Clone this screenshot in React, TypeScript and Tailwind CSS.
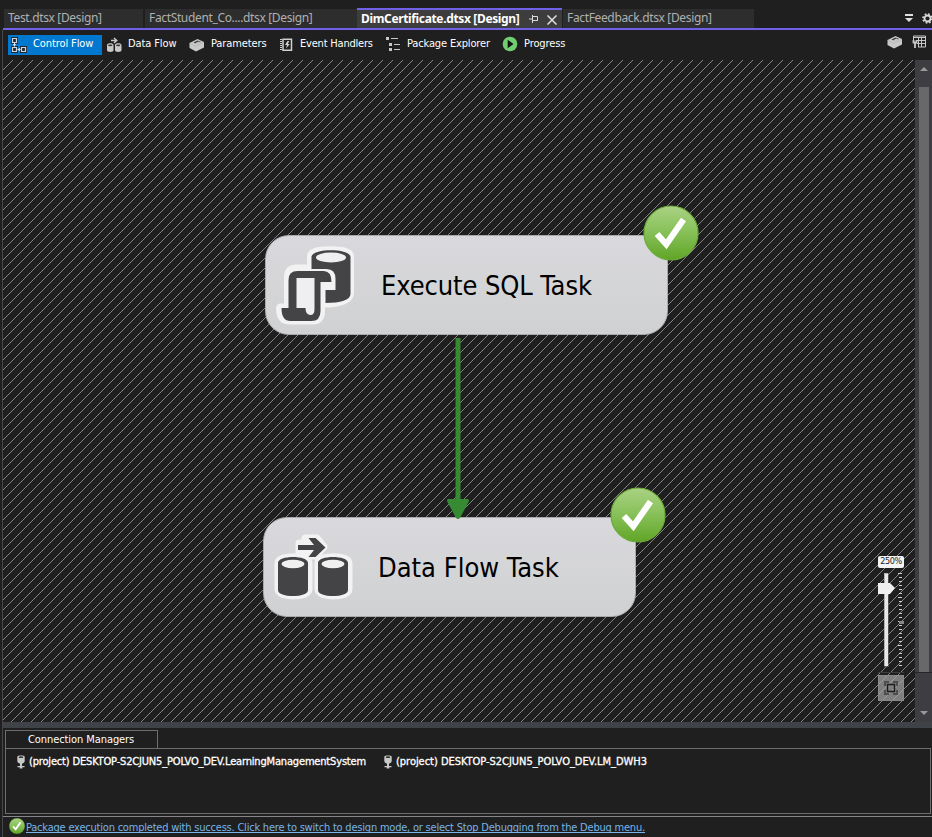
import React from 'react';

const ui = 'font-["Noto_Sans","Open_Sans",sans-serif] tracking-[-0.35px]';
const tahoma = 'font-["DejaVu_Sans_Condensed","DejaVu_Sans",sans-serif] [font-stretch:condensed]';

function ControlFlowIcon() {
  return (
    <svg width="16" height="16" viewBox="0 0 16 16" fill="none" className="shrink-0">
      <path d="M0 0h7v7H0zM0 9h7v7H0zM9 9h7v7H9z" fill="#1d2a35" />
      <path d="M1.500 1.500h4v4h-4zM1.500 10.500h4v4h-4zM10.500 10.500h4v4h-4z" stroke="#d4d4d4" strokeWidth="1.200" />
      <path d="M3.500 6v3.500M2 7.800h3M6.500 12.500h3M8.300 11v3" strokeWidth="1.100" stroke="#e4e4e4" />
    </svg>
  );
}

function DataFlowIcon() {
  return (
    <svg width="15" height="16" viewBox="0 0 15 16" className="shrink-0">
      <path d="M0 8c0-2.300 6.500-2.300 6.500 0v5.300c0 2.300-6.500 2.300-6.500 0zM8 8c0-2.300 6.500-2.300 6.500 0v5.300c0 2.300-6.500 2.300-6.500 0z" fill="#c8c8c8" />
      <ellipse cx="3.250" cy="8.300" rx="2.200" ry=".9" fill="#333" />
      <ellipse cx="11.250" cy="8.300" rx="2.200" ry=".9" fill="#333" />
      <path d="M4 3.500h5.500M7 1l2.800 2.500L7 6" stroke="#c8c8c8" strokeWidth="1.400" fill="none" />
    </svg>
  );
}

function BoxIcon() {
  return (
    <svg width="16" height="14" viewBox="0 0 16 14" className="shrink-0">
      <path d="M.5 5 8.500 1 15 4v5.500l-8 4-6.500-3.500z" fill="#c9c9c9" />
      <path d="m.5 5.300 6.500 3 8-4" fill="none" stroke="#a8a8a8" strokeWidth=".5" />
      <path d="m4.500 4.600 4.200-2.200 3.300 1.500-4.300 2.200z" fill="#333" />
      <path d="m6 5.200 3.400-1.700 2 .9-3.600 1.800z" fill="#c9c9c9" />
    </svg>
  );
}

function EventIcon() {
  return (
    <svg width="13" height="14" viewBox="0 0 13 14" className="shrink-0">
      <path d="M3 1.200h8.500v11H3z" fill="none" stroke="#d0d0d0" strokeWidth="1.500" />
      <path d="M0 1.500h2M0 3.500h2M0 5.500h2M0 7.500h2M0 9.500h2M0 11.500h2" stroke="#d0d0d0" />
      <path d="M7.500 3 5 7h2l-1 3.500L9.800 6h-2L9.300 3z" fill="#d0d0d0" />
    </svg>
  );
}

function ExplorerIcon() {
  return (
    <svg width="15" height="15" viewBox="0 0 15 15" fill="#c8c8c8" className="-mt-px shrink-0">
      <path d="M0 0h3v3H0zM3 6h3v3H3zM3 11h3v3H3zM5 1h7v1H5zM8 7h6v1H8zM8 12h6v1H8z" />
    </svg>
  );
}

function ProgressIcon() {
  return (
    <svg width="16" height="16" viewBox="0 0 16 16" className="-mt-[2px] shrink-0">
      <circle cx="8" cy="8" r="7.300" fill="#70cd70" />
      <path d="M5.700 3.800v8.400L11.500 8z" fill="#101010" />
    </svg>
  );
}

function PlugIcon() {
  return (
    <svg width="8" height="14" viewBox="0 0 8 14" className="shrink-0">
      <path d="M.3 1.500C.3 0 7.700 0 7.700 1.500V6c0 1.500-1.500 2.500-2.700 2.500V11H3V8.500C1.800 8.500.3 7.500.3 6z" fill="#c8c8c8" />
      <ellipse cx="4" cy="2.200" rx="2.300" ry=".9" fill="#333" />
      <path d="M.5 11h7v1.300H5.300v1.200H2.700v-1.200H.5z" fill="#c8c8c8" />
    </svg>
  );
}

function Check({ size, id }: { size: number; id: string }) {
  return (
    <svg width={size} height={size} viewBox="0 0 56 56" className="block shrink-0">
      <defs>
        <linearGradient id={id} x1="0" y1="0" x2="0" y2="1">
          <stop offset="0" stopColor="#aad284" />
          <stop offset=".45" stopColor="#8ac25c" />
          <stop offset="1" stopColor="#60a526" />
        </linearGradient>
      </defs>
      <circle cx="28" cy="28" r="27" fill={`url(#${id})`} stroke="#6cab38" strokeWidth="1.200" />
      <path d="m14 29 9.300 10.300L40.500 14.500" fill="none" stroke="#fff" strokeWidth="6.200" />
    </svg>
  );
}

function SqlTaskIcon() {
  return (
    <svg width="80" height="80" viewBox="15.500 9 80 80" className="block">
      <g stroke="#f2f2f3" strokeWidth="9" strokeLinejoin="round" fill="#f2f2f3">
        <path d="M51 33V20c0-7 38-7 38 0v37c0 6-10 10-25 10V33z" />
        <path d="M28 70V41q0-8 8-8h27q7 0 7 10H60v33q0 8-8 8H29q-9 0-9-12h8z" />
      </g>
      <path d="M51 33V21c0-9 39-9 39 0v37c0 6-10 9-25 9V54h10V43q0-10-9-10z" fill="#444446" />
      <ellipse cx="70.500" cy="21.500" rx="15" ry="5" fill="#efeff1" />
      <path d="M28 72V44q0-9 9-9h26q8 0 8 11H60v29q0 10-9 10H30q-9 0-9-13z" fill="#444446" />
      <path d="M36 42h18v31q0 6-4 6-5 0-5-7h-9z" fill="#efeff1" />
    </svg>
  );
}

function FlowTaskIcon() {
  return (
    <svg width="80" height="72" viewBox="0 0 80 72" className="block">
      <g stroke="#f2f2f3" strokeWidth="9" strokeLinejoin="round" fill="#f2f2f3">
        <path d="M6 32c0-7 29-7 29 0v26c0 8-29 8-29 0zM46 32c0-7 29-7 29 0v26c0 8-29 8-29 0z" />
        <path d="M26 12h14l-8-5h12l7 9-8 9H26z" strokeWidth="7" />
      </g>
      <path d="M5 32c0-8 30-8 30 0v27c0 8-30 8-30 0zM45 32c0-8 30-8 30 0v27c0 8-30 8-30 0z" fill="#444446" />
      <ellipse cx="20" cy="33" rx="11.500" ry="4.200" fill="#f0f0f1" />
      <ellipse cx="60" cy="33" rx="11.500" ry="4.200" fill="#f0f0f1" />
      <path d="M25 14h16l-5.500-7h7L52.500 16.500 42.500 26h-7l5.500-7H25z" fill="#444446" />
    </svg>
  );
}

function CanvasHatch() {
  return (
    <svg width="912" height="662" className="absolute inset-0" shapeRendering="crispEdges">
      <defs>
        <pattern id="hatch" width="10" height="10" patternUnits="userSpaceOnUse">
          <path d="M9 0h1v1H9zM8 1h1v1H8zM7 2h1v1H7zM6 3h1v1H6zM5 4h1v1H5zM4 5h1v1H4zM3 6h1v1H3zM2 7h1v1H2zM1 8h1v1H1zM0 9h1v1H0z" fill="#868686" />
        </pattern>
      </defs>
      <rect width="912" height="662" fill="url(#hatch)" />
    </svg>
  );
}

function ZoomControl() {
  const ticks = Array.from({ length: 24 }, (_, i) => i);
  return (
    <div className="absolute left-[875px] top-[496px] w-[26px]">
      <div className={`${tahoma} h-[12px] w-[26px] rounded-[2px] bg-[#f4f4f4] text-center text-[9px] leading-[11px] tracking-[-0.4px] text-[#222]`}>250%</div>
      <svg width="26" height="110" className="mt-[4px] block" shapeRendering="crispEdges">
        <rect x="6" y="1" width="4" height="93" fill="#e8e8e8" stroke="#777" strokeWidth=".5" />
        {ticks.map((i) => (
          <rect key={i} x={i % 6 === 0 ? 20 : 21} y={1 + i * 4} width={i % 6 === 0 ? 4 : 3} height="1" fill="#d0d0d0" />
        ))}
        <rect x="21" y="49" width="5" height="3" fill="#888" />
        <path d="M0 11h12l5 5-5 6H0z" fill="#efefef" shapeRendering="auto" />
        <rect y="100" width="26" height="1" fill="#3c3c3c" />
      </svg>
      <div className="-mt-[7px] flex h-[26px] w-[26px] items-center justify-center border border-[#8a8a8a] bg-[#a0a0a0]/75">
        <svg width="14" height="14" viewBox="0 0 14 14" fill="none" stroke="#4e4e4e" strokeWidth="2">
          <path d="M1 5V1h4M9 1h4v4M13 9v4H9M5 13H1V9" />
          <path d="M3.500 3.500h7v7h-7z" stroke="#1b1b1b" strokeWidth="1.400" />
        </svg>
      </div>
    </div>
  );
}

export default function App() {
  return (
    <div className="flex h-[837px] w-[932px] flex-col overflow-hidden bg-[#1f1f1f] text-white">
      <div className={`${ui} flex h-[30px] shrink-0 items-end whitespace-nowrap pl-[3px] text-[12px] text-[#b0b0b0]`}>
        <div className="flex h-[22px] w-full items-start border-b-2 border-[#7160e8]">
          <div className="ml-px mt-px h-[19px] w-[139px] shrink-0 bg-[#2d2d2d] pl-[4px] leading-[18px]">Test.dtsx [Design]</div>
          <div className="ml-[2px] mt-px h-[19px] w-[212px] shrink-0 bg-[#2d2d2d] pl-[4px] leading-[18px]">FactStudent_Co....dtsx [Design]</div>
          <div className="flex h-[20px] w-[205px] shrink-0 items-center border-t-2 border-[#7160e8] bg-[#3d3d3d] pb-px pl-[4px] font-bold leading-[17px] text-white">
            <span className="w-[168px] shrink-0">DimCertificate.dtsx [Design]</span>
            <svg width="9" height="8" viewBox="0 0 9 8" className="mt-px shrink-0" fill="none" stroke="#dcdcdc"><path d="M0 4h3M3.500 0v8M3.500 1.500h5v4h-5M3.500 5.500h5" /></svg>
            <svg width="10" height="10" viewBox="0 0 10 10" className="ml-[9px] mt-[2px] shrink-0" stroke="#e0e0e0" strokeWidth="1.500"><path d="m.5.5 9 9M9.500.5l-9 9" /></svg>
          </div>
          <div className="ml-px mt-px h-[19px] w-[191px] shrink-0 bg-[#2d2d2d] pl-[4px] leading-[18px]">FactFeedback.dtsx [Design]</div>
          <svg width="8" height="9" viewBox="0 0 8 9" className="ml-[151px] mt-[6px] shrink-0" fill="#e0e0e0"><path d="M0 0h8v2H0zM0 4h8L4 8z" /></svg>
          <svg width="11" height="11" viewBox="0 0 11 11" className="ml-[9px] mt-[5px] shrink-0" fill="none" stroke="#d8d8d8"><circle cx="5.500" cy="5.500" r="3" strokeWidth="1.800" /><circle cx="5.500" cy="5.500" r="4.500" strokeWidth="1.600" strokeDasharray="1.770 1.770" /></svg>
        </div>
      </div>

      <div className="ml-[2px] flex min-h-0 flex-1 flex-col border-l border-[#48484c]">
        <div className={`${tahoma} flex h-[30px] shrink-0 items-start whitespace-nowrap pt-[5px] text-[11px] leading-[18px] tracking-[-0.1px]`}>
          <div className="ml-[5px] flex h-[20px] w-[94px] items-center bg-[#0078d0] pl-[3px]"><ControlFlowIcon /><span className="-mt-[2px] ml-[6px]">Control Flow</span></div>
          <div className="ml-[5px] flex h-[20px] w-[82px] items-center"><DataFlowIcon /><span className="-mt-[2px] ml-[6px]">Data Flow</span></div>
          <div className="flex h-[20px] w-[91px] items-center"><BoxIcon /><span className="-mt-[2px] ml-[6px]">Parameters</span></div>
          <div className="flex h-[20px] w-[106px] items-center"><EventIcon /><span className="-mt-[2px] ml-[7px] tracking-[-0.2px]">Event Handlers</span></div>
          <div className="flex h-[20px] w-[116px] items-center"><ExplorerIcon /><span className="-mt-[2px] ml-[6px] tracking-[-0.15px]">Package Explorer</span></div>
          <div className="flex h-[20px] w-[385px] items-center"><ProgressIcon /><span className="-mt-[2px] ml-[6px]">Progress</span></div>
          <BoxIcon />
          <svg width="14" height="14" viewBox="0 0 14 14" className="ml-[9px] shrink-0" fill="none" stroke="#c8c8c8"><path d="M1.500 5V1h12v11H6M1 2.500h12M5 5.500h8M5 8.500h8M9.500 2v10M6.500 2v10" /><path d="M1.500 5v2.500h3V5M3 7.500V13" strokeWidth="1.800" /></svg>
        </div>

        <div className="flex h-[662px] shrink-0">
          <div className="relative h-[662px] w-[912px] overflow-hidden">
            <CanvasHatch />
            <div className="absolute left-[262px] top-[175px] flex h-[100px] w-[403px] items-center rounded-[24px] border border-[#a9a9ab] bg-linear-to-b from-[#d9d9dd] to-[#d0d1d2] pl-[10px]">
              <SqlTaskIcon />
              <span className={`${tahoma} ml-[25px] mt-[3px] whitespace-nowrap text-[27px] tracking-[-0.1px] text-black`}>Execute SQL Task</span>
            </div>
            <div className="absolute left-[260px] top-[457px] flex h-[100px] w-[373px] items-center rounded-[24px] border border-[#a9a9ab] bg-linear-to-b from-[#d9d9dd] to-[#d0d1d2] pl-[9px]">
              <FlowTaskIcon />
              <span className={`${tahoma} ml-[25px] mt-[3px] whitespace-nowrap text-[27px] text-black`}>Data Flow Task</span>
            </div>
            <svg width="22" height="182" className="absolute left-[444px] top-[278px]" fill="#368a32">
              <path d="M8.500 0h5v163h-5zM1 161h20q2 1 0 4l-8 15q-2 2-4 0l-8-15q-2-3 0-4z" />
            </svg>
            <div className="absolute left-[640px] top-[145px]"><Check size={56} id="okSql" /></div>
            <div className="absolute left-[607px] top-[427px]"><Check size={56} id="okFlow" /></div>
            <ZoomControl />
          </div>
          <div className="flex w-[17px] flex-col items-center bg-[#3e3e42]">
            <svg width="8" height="4" className="mt-[7px]" fill="#999"><path d="M0 4h8L4 0z" /></svg>
            <div className="mt-[16px] h-[585px] w-[10px] bg-[#686868]" />
            <div className="h-px w-full bg-[#252526]" />
            <svg width="8" height="4" className="mt-[38px]" fill="#999"><path d="M0 0h8L4 4z" /></svg>
          </div>
        </div>

        <div className="h-[6px] shrink-0 bg-[#3f4347]" />
        <div className={`${tahoma} ml-[2px] mt-[2px] h-[19px] w-[153px] shrink-0 whitespace-nowrap border border-b-0 border-[#6d6d6d] pl-[22px] text-[11px] leading-[17px] tracking-[-0.08px]`}>Connection Managers</div>
        <div className={`${tahoma} -mt-px ml-[2px] flex h-[66px] w-[926px] shrink-0 items-start whitespace-nowrap border border-[#6d6d6d] pl-[11px] pt-[6px] text-[11px] leading-[13px] [-webkit-text-stroke:0.3px_white]`}>
          <div className="flex w-[367px]"><PlugIcon /><span className="ml-[4px] tracking-[-0.17px]">(project) DESKTOP-S2CJUN5_POLVO_DEV.LearningManagementSystem</span></div>
          <div className="flex"><PlugIcon /><span className="ml-[4px] tracking-[-0.03px]">(project) DESKTOP-S2CJUN5_POLVO_DEV.LM_DWH3</span></div>
        </div>
        <div className={`${tahoma} mt-[2px] flex h-[21px] shrink-0 items-start whitespace-nowrap border-t border-[#85858a] pl-[6px] pt-[1px] text-[11px] text-[#78b4e8]`}>
          <Check size={16} id="okStatus" />
          <span className="ml-px h-[15px] border-b border-[#78b4e8] leading-[19px] tracking-[-0.21px]">Package execution completed with success. Click here to switch to design mode, or select Stop Debugging from the Debug menu.</span>
        </div>
      </div>
    </div>
  );
}
